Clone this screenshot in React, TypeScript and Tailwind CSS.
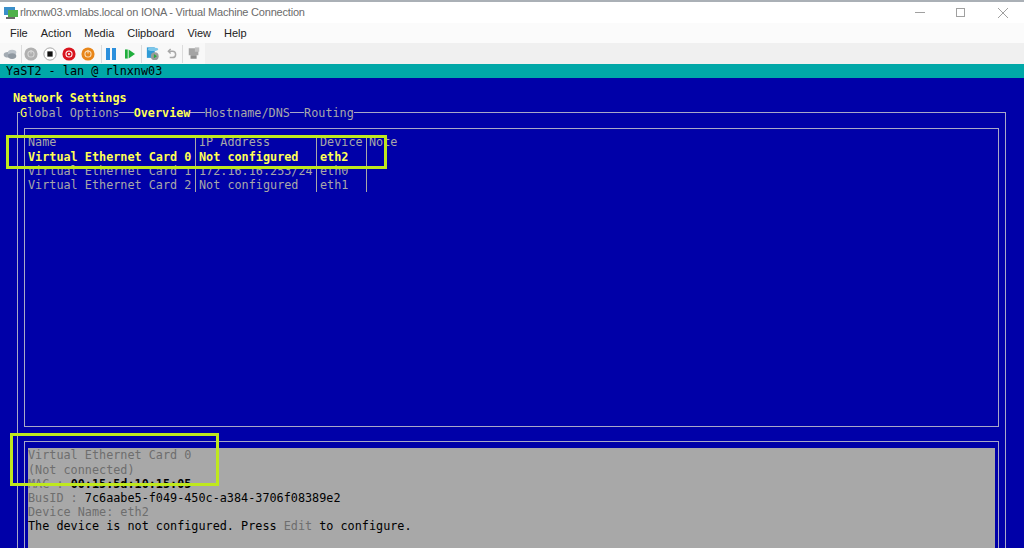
import React from 'react'

const Sep = () => <div className="w-px h-[18px] bg-[#dcdcdc]" />

const Toolbar = () => (
  <div className="flex items-center h-[21px] w-[205px] pl-[3px] bg-[#f8f8f8]">
    <svg width="14" height="10" viewBox="0 0 20 14" className="mr-[4px]">
      <ellipse cx="7" cy="8" rx="6" ry="4" fill="#a3abb3" />
      <ellipse cx="13" cy="5" rx="6" ry="4" fill="#bcc3ca" />
      <ellipse cx="13" cy="10" rx="6" ry="4" fill="#8f98a1" />
    </svg>
    <Sep />
    <svg width="14" height="14" viewBox="0 0 16 16" className="ml-[2px] mr-[5px]">
      <circle cx="8" cy="8" r="7.5" fill="#b0b0b0" />
      <circle cx="8" cy="8" r="3.5" fill="none" stroke="#d8d8d8" strokeWidth="1.2" />
      <path d="M8 3.5v4" stroke="#d8d8d8" strokeWidth="1.2" />
    </svg>
    <svg width="14" height="14" viewBox="0 0 16 16" className="mr-[5px]">
      <circle cx="8" cy="8" r="7" fill="#fff" stroke="#9a9a9a" />
      <rect x="5" y="5" width="6" height="6" fill="#111" />
    </svg>
    <svg width="14" height="14" viewBox="0 0 16 16" className="mr-[5px]">
      <circle cx="8" cy="8" r="7.5" fill="#d9141e" />
      <circle cx="8" cy="8" r="3.5" fill="none" stroke="#fff" strokeWidth="1.2" />
      <circle cx="8" cy="8" r="1.2" fill="#fff" />
    </svg>
    <svg width="14" height="14" viewBox="0 0 16 16" className="mr-[6px]">
      <circle cx="8" cy="8" r="7.5" fill="#e8861a" />
      <circle cx="8" cy="8" r="3.5" fill="none" stroke="#fbe3c0" strokeWidth="1.2" />
      <path d="M8 3.5v4" stroke="#fbe3c0" strokeWidth="1.2" />
    </svg>
    <Sep />
    <svg width="10" height="14" viewBox="0 0 10 14" className="ml-[4px] mr-[9px]">
      <rect x="0" y="1" width="4" height="12" fill="#2b8fdc" />
      <rect x="6" y="1" width="4" height="12" fill="#2b8fdc" />
    </svg>
    <svg width="10" height="12" viewBox="0 0 11 12" className="mr-[6px]">
      <rect x="0" y="1" width="3" height="10" fill="#1fae3c" />
      <path d="M4 1l7 5-7 5z" fill="#1fae3c" />
    </svg>
    <Sep />
    <svg width="14" height="15" viewBox="0 0 16 16" className="ml-[4px] mr-[7px]">
      <rect x="1" y="1" width="9" height="12" fill="#2f9bd6" />
      <ellipse cx="8" cy="3" rx="6" ry="2" fill="#7cc7ea" />
      <circle cx="10" cy="11" r="4.5" fill="#9a9a9a" />
      <path d="M9 8.5l3.5 2.5L9 13.5z" fill="#27a83f" />
    </svg>
    <svg width="10" height="13" viewBox="0 0 11 14" className="mr-[5px]" fill="none" stroke="#a8a8a8" strokeWidth="1.6">
      <path d="M4 2L1.5 4.5 4 7" />
      <path d="M2 4.5h4a3.5 3.5 0 0 1 0 7H3" />
    </svg>
    <Sep />
    <svg width="14" height="15" viewBox="0 0 16 16" className="ml-[4px]">
      <rect x="2" y="2" width="11" height="8" fill="#a4a4a4" />
      <rect x="4" y="10" width="7" height="4" fill="#8c8c8c" />
      <path d="M9 1h5v5H9z" fill="#c0c0c0" />
    </svg>
  </div>
)

const TopFrameRow = ({ cells, active }: { cells: string; active?: boolean }) => (
  <div className={active ? 'text-[#ffff54] font-bold' : ''}>{cells}</div>
)

export default function App() {
  return (
    <div className="relative w-[1024px] h-[548px] overflow-hidden flex flex-col bg-white font-['Liberation_Sans',sans-serif]">
      <div className="h-[2px] shrink-0 bg-[#aab0b6]" />
      <div className="h-[21px] shrink-0 flex items-center pl-[3px] bg-white">
        <svg width="16" height="16" viewBox="0 0 16 16" className="mr-[1px]">
          <rect x="1" y="2" width="11" height="8" fill="#3a8fc9" />
          <rect x="5" y="5" width="10" height="7" fill="#4fb04a" />
          <rect x="3" y="12" width="9" height="2" fill="#6a6a6a" />
        </svg>
        <span className="text-[11px] tracking-[-0.2px] text-[#6b6b6b]">rlnxnw03.vmlabs.local on IONA - Virtual Machine Connection</span>
        <div className="ml-auto flex items-center pr-[16px] gap-[31px]">
          <div className="w-[10px] h-px bg-[#a0a0a0]" />
          <div className="w-[9px] h-[9px] border border-[#a0a0a0]" />
          <svg width="10" height="10" viewBox="0 0 10 10" stroke="#a0a0a0" strokeWidth="1" className="ml-[2px]">
            <path d="M0 0l10 10M10 0L0 10" />
          </svg>
        </div>
      </div>
      <div className="h-[20px] shrink-0 flex items-center pl-[10px] gap-[13px] bg-[#fbfbfb] text-[11px] text-[#222]">
        <span>File</span>
        <span>Action</span>
        <span>Media</span>
        <span>Clipboard</span>
        <span>View</span>
        <span>Help</span>
      </div>
      <div className="h-[21px] shrink-0 bg-[#f0f0f0]">
        <Toolbar />
      </div>

      <div className="h-[14px] shrink-0 bg-[#00a8a8] pl-[6px] font-['DejaVu_Sans_Mono',monospace] text-[11.8px] leading-[14px] text-black">
        YaST2 - lan @ rlnxnw03
      </div>

      <div className="flex-1 min-h-0 bg-[#0000a8] pt-[13px] font-['DejaVu_Sans_Mono',monospace] text-[11.8px] leading-[14.2px] text-[#a8a8a8]">
        <div className="pl-[13px] font-bold text-[#ffff54]">Network Settings</div>

        <div className="ml-[17px] mr-[18px] mt-[7px] border-l border-r border-t border-[#a8a8c8]">
          <div className="-mt-[7px] pl-[2px] flex gap-[14.2px]">
            <span className="bg-[#0000a8]"><span className="text-[#ffff54]">G</span>lobal Options</span>
            <span className="bg-[#0000a8] font-bold text-[#ffff54]">Overview</span>
            <span className="bg-[#0000a8]">Hostname/DNS</span>
            <span className="bg-[#0000a8]">Routing</span>
          </div>

          <div className="mx-[6px] mt-[8px] h-[299px] border border-[#a8a8c8] pt-[6px] flex items-start">
            <div className="w-[171px] h-[57px] pl-[3px] border-r border-[#a8a8a8]">
              <div>Name</div>
              <TopFrameRow cells="Virtual Ethernet Card 0" active />
              <TopFrameRow cells="Virtual Ethernet Card 1" />
              <TopFrameRow cells="Virtual Ethernet Card 2" />
            </div>
            <div className="w-[121px] h-[57px] pl-[3px] border-r border-[#a8a8a8]">
              <div>IP Address</div>
              <TopFrameRow cells="Not configured" active />
              <TopFrameRow cells="172.16.16.253/24" />
              <TopFrameRow cells="Not configured" />
            </div>
            <div className="w-[50px] h-[57px] pl-[3px] border-r border-[#a8a8a8]">
              <div>Device</div>
              <TopFrameRow cells="eth2" active />
              <TopFrameRow cells="eth0" />
              <TopFrameRow cells="eth1" />
            </div>
            <div className="pl-[2px]">Note</div>
          </div>

          <div className="mx-[6px] mt-[14px] h-[200px] border border-[#a8a8c8] px-[3px] pt-[6px]">
            <div className="h-full bg-[#a8a8a8] text-[#6e6e6e]">
              <div>Virtual Ethernet Card 0</div>
              <div>(Not connected)</div>
              <div>MAC : <span className="text-black font-bold">00:15:5d:10:15:05</span></div>
              <div>BusID : <span className="text-black">7c6aabe5-f049-450c-a384-3706f08389e2</span></div>
              <div>Device Name: eth2</div>
              <div className="text-black">The device is not configured. Press <span className="text-[#6e6e6e]">Edit</span> to configure.</div>
            </div>
          </div>
        </div>
      </div>

      <div className="absolute left-[6px] top-[135px] w-[381px] h-[34px] border-[3px] border-[#bfe81e]" />
      <div className="absolute left-[10px] top-[433px] w-[209px] h-[53px] border-[3px] border-[#bfe81e]" />
    </div>
  )
}
